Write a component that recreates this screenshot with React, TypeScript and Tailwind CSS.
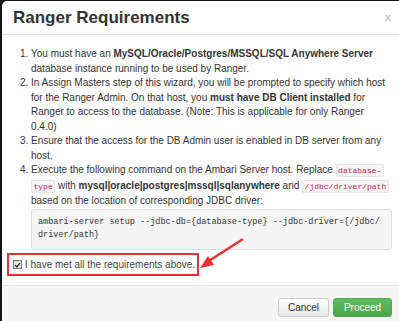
export default function App() {
  const code =
    "rounded-[2px] border border-[#e6e6e6] bg-[#f9f4f6] px-[1.5px] py-[1px] font-['Liberation_Mono',monospace] text-[8px] text-[#c7254e] [box-decoration-break:clone]";
  return (
    <div className="relative h-[321px] w-[399px] overflow-hidden bg-[#151515] pl-[2px] pt-[1px] font-['Liberation_Sans',Arial,sans-serif] text-[10px] text-[#333]">
      <div className="h-[330px] w-[397px] rounded-tl-[5px] bg-white">
        <div className="flex h-[34px] items-center justify-between border-b border-[#e5e5e5] pl-[11px] pr-[8px]">
          <h3 className="text-[17px] font-bold leading-[19px] text-[#333]">Ranger Requirements</h3>
          <span className="mb-[1px] text-[11px] font-bold text-[#c4c4c4]">x</span>
        </div>

        <div className="pl-[11px] pr-[7px] pt-[12px] pb-[13px] leading-[14.5px]">
          <ol className="list-decimal pl-[18px] pr-[2px]">
            <li>
              You must have an <b>MySQL/Oracle/Postgres/MSSQL/SQL Anywhere Server</b> database instance
              running to be used by Ranger.
            </li>
            <li>
              In Assign Masters step of this wizard, you will be prompted to specify which host for the
              Ranger Admin. On that host, you <b>must have DB Client installed</b> for Ranger to access to
              the database. (Note: This is applicable for only Ranger 0.4.0)
            </li>
            <li>Ensure that the access for the DB Admin user is enabled in DB server from any host.</li>
            <li>
              Execute the following command on the Ambari Server host. Replace{" "}
              <code className={code}>database-type</code> with{" "}
              <b>mysql|oracle|postgres|mssql|sqlanywhere</b> and{" "}
              <code className={code}>/jdbc/driver/path</code> based on the location of corresponding JDBC
              driver:
              <pre className="-mr-[2px] rounded-[3px] border border-[#ddd] bg-[#f5f5f5] px-[6px] py-[6px] font-['Liberation_Mono',monospace] text-[8.5px] leading-[13.5px] whitespace-pre text-[#333]">
                {"ambari-server setup --jdbc-db={database-type} --jdbc-driver={/jdbc/\ndriver/path}"}
              </pre>
            </li>
          </ol>

          <label className="mt-[8px] flex items-center gap-[3px] text-[#444]">
            <span className="flex h-[9px] w-[9px] items-center justify-center border border-[#7a7a7a] bg-[#e4e4e4]">
              <svg viewBox="0 0 10 10" className="h-[8px] w-[8px]">
                <path d="M1.5 5.2 L4 7.6 L8.6 2.2" fill="none" stroke="#222" strokeWidth="1.8" />
              </svg>
            </span>
            I have met all the requirements above.
          </label>
        </div>

        <div className="flex h-[60px] justify-end gap-[4px] border-t border-[#e5e5e5] bg-[#f5f5f5] pr-[7px] pt-[12px]">
          <button className="h-[19px] w-[51px] rounded-[3px] border border-[#ccc] bg-gradient-to-b from-white to-[#e6e6e6] text-[10px] text-[#333]">
            Cancel
          </button>
          <button className="h-[19px] w-[59px] rounded-[3px] border border-[#4cae4c] bg-gradient-to-b from-[#5fbb5f] to-[#48a648] text-[10px] text-white">
            Proceed
          </button>
        </div>
      </div>

      <div className="absolute left-[7px] top-[253px] h-[23px] w-[192px] border-2 border-[#e8302f]" />
      <svg className="pointer-events-none absolute left-0 top-0 h-[321px] w-[399px]" viewBox="0 0 399 321">
        <line x1="243" y1="239" x2="208" y2="261.5" stroke="#e8302f" strokeWidth="2.4" />
        <polygon points="200,268 214,265 208,256" fill="#e8302f" />
      </svg>
    </div>
  );
}
